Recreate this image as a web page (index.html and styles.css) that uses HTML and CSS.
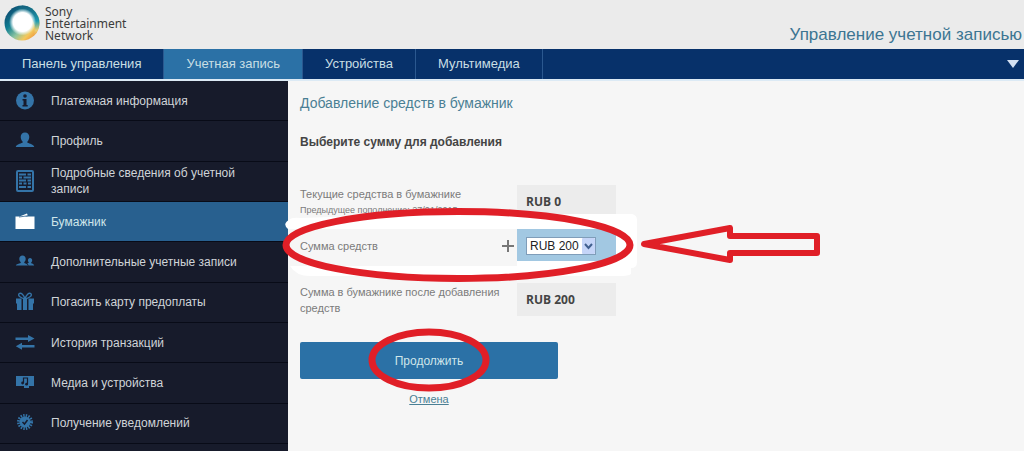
FILE: index.html
```html
<!DOCTYPE html>
<html lang="ru">
<head>
<meta charset="utf-8">
<title>Управление учетной записью</title>
<link rel="stylesheet" href="styles.css">
</head>
<body>
<header class="header">
  <a class="brand" href="#">
    <svg class="brand-mark" viewBox="0 0 36 36" aria-hidden="true">
      <defs>
        <linearGradient id="ring" x1="0" y1="0.1" x2="0.9" y2="1">
          <stop offset="0" stop-color="#0d3c66"/>
          <stop offset="0.35" stop-color="#0f7f93"/>
          <stop offset="0.6" stop-color="#8fc5a0"/>
          <stop offset="0.78" stop-color="#f3c95c"/>
          <stop offset="1" stop-color="#ee7f2b"/>
        </linearGradient>
        <linearGradient id="edge" x1="0" y1="0" x2="0" y2="1">
          <stop offset="0" stop-color="#14607c"/>
          <stop offset="0.5" stop-color="#1c9ab0"/>
          <stop offset="0.8" stop-color="#e9cf70"/>
          <stop offset="1" stop-color="#f09a3a"/>
        </linearGradient>
        <radialGradient id="glow">
          <stop offset="0.7" stop-color="#fff"/>
          <stop offset="1" stop-color="#fff" stop-opacity="0"/>
        </radialGradient>
      </defs>
      <circle cx="18" cy="18" r="17.500" fill="url(#ring)"/>
      <path d="M18 .5A17.500 17.500 0 0 1 29 31.600C34 20 28 8 14 6Z" fill="url(#edge)"/>
      <circle cx="18.500" cy="17" r="13.500" fill="url(#glow)"/>
    </svg>
    <span class="brand-name">Sony<br>Entertainment<br>Network</span>
  </a>
  <h1 class="header-title">Управление учетной записью</h1>
</header>

<nav class="tabs">
  <a class="tab" href="#">Панель управления</a>
  <a class="tab tab-active" href="#" aria-current="page">Учетная запись</a>
  <a class="tab" href="#">Устройства</a>
  <a class="tab" href="#">Мультимедиа</a>
  <button class="tabs-more" type="button" aria-label="Меню">
    <svg width="12" height="8" viewBox="0 0 12 8"><path d="M0 0h12L6 8z" fill="#d3e0f2"/></svg>
  </button>
</nav>

<div class="layout">
  <nav class="sidebar">
    <a class="side-item" href="#">
      <svg class="side-icon" viewBox="0 0 20 20"><circle cx="10" cy="9.500" r="9" fill="currentColor"/><circle cx="10" cy="5" r="1.800" fill="#171b2d"/><path d="M7.500 8h4v6h1.200v1.500H7.500V14h1V9.500h-1z" fill="#171b2d"/></svg>
      <span>Платежная информация</span>
    </a>
    <a class="side-item" href="#">
      <svg class="side-icon" viewBox="0 0 20 20"><path fill="currentColor" d="M10 1.500c2.700 0 4.300 1.900 4.300 4.500 0 1.900-.8 3.500-1.900 4.500v1.300c2.500.9 5.900 1.600 6.900 4.200H.7c1-2.600 4.400-3.300 6.900-4.200v-1.300C6.500 9.500 5.700 7.900 5.700 6c0-2.600 1.600-4.500 4.300-4.500z"/></svg>
      <span>Профиль</span>
    </a>
    <a class="side-item" href="#">
      <svg class="side-icon side-icon-tall" viewBox="0 0 20 24"><rect x="2" y="2" width="16" height="20" rx="1" fill="none" stroke="currentColor" stroke-width="2"/><path d="M4 5.500h7m1.500 0H16M4 8.500h3m1.500 0H16M4 11.500h7m1.500 0H16M4 14.500h3m1.500 0h3m1.500 0h3M4 18h7m1.500 0H16" stroke="currentColor" stroke-width="2"/></svg>
      <span>Подробные сведения об учетной записи</span>
    </a>
    <a class="side-item side-active" href="#" aria-current="page">
      <svg class="side-icon" viewBox="0 0 20 20"><path fill="#fff" d="M.5 4.500h4L12 1.500l.8 2-3 1h9.700V17H.5z"/><path d="M4 5 12.800 3.800" stroke="#28608f" stroke-width=".8"/></svg>
      <span>Бумажник</span>
    </a>
    <a class="side-item" href="#">
      <svg class="side-icon" viewBox="0 0 20 20"><path fill="currentColor" d="M7.500 3.500c2 0 3.200 1.400 3.200 3.300 0 1.400-.6 2.600-1.400 3.300v.8c1.700.6 3.200 1.200 3.700 2.600H.8c.5-1.700 2.900-2 4.900-2.600v-.8C4.900 9.400 4.300 8.200 4.300 6.800c0-1.900 1.200-3.300 3.200-3.300z"/><path fill="currentColor" d="M15 6c1.400 0 2.200 1 2.200 2.300 0 1-.4 1.800-1 2.300v.6c1.400.4 2.700.9 3 2.300h-5.700c-.2-1.100-.6-1.700-1.200-2.200l1.500-.5v-.3c-.5-.6-.9-1.300-.9-2.200C12.900 7 13.700 6 15 6z"/></svg>
      <span>Дополнительные учетные записи</span>
    </a>
    <a class="side-item" href="#">
      <svg class="side-icon" viewBox="0 0 20 20"><path fill="currentColor" d="M1 6.500h5.500V18H2v-6.500H1zM8 6.500h4V18H8zM13.500 6.500H19v5h-1V18h-4.500z"/><path d="M10 7C6 6 2.500 4 4 1.800 6 0 9 3 10 7c1-4 4-7 6-5.200C17.500 4 14 6 10 7z" fill="none" stroke="currentColor" stroke-width="1.300"/></svg>
      <span>Погасить карту предоплаты</span>
    </a>
    <a class="side-item" href="#">
      <svg class="side-icon" viewBox="0 0 20 20"><path fill="currentColor" d="M.5 4.500H13V2l6.500 3.500L13 9V7H.5zM19.500 12H7V9.800L.8 13.300 7 16.800v-2.300h12.500z"/></svg>
      <span>История транзакций</span>
    </a>
    <a class="side-item" href="#">
      <svg class="side-icon" viewBox="0 0 20 20"><path fill="currentColor" d="M1 3h18v10h-5v2H9v-2H1z"/><path fill="none" stroke="#171b2d" stroke-width="1.200" d="M8.500 10V5h4v6"/><circle cx="7.600" cy="10" r="1.400" fill="#171b2d"/><circle cx="11.600" cy="11.200" r="1.400" fill="#171b2d"/></svg>
      <span>Медиа и устройства</span>
    </a>
    <a class="side-item" href="#">
      <svg class="side-icon" viewBox="0 0 20 20"><circle cx="10" cy="9" r="5.500" fill="currentColor"/><circle cx="10" cy="9" r="6.500" fill="none" stroke="currentColor" stroke-width="3" stroke-dasharray="1.400 1.150"/><path d="m7.500 9 2 2 3-4" fill="none" stroke="#171b2d" stroke-width="1.500"/></svg>
      <span>Получение уведомлений</span>
    </a>
  </nav>

  <main class="content">
    <h2 class="title">Добавление средств в бумажник</h2>
    <h3 class="subtitle">Выберите сумму для добавления</h3>
    <form class="form">
      <div class="row">
        <div class="label">Текущие средства в бумажнике<small class="note">Предыдущее пополнение: 27/01/2015</small></div>
        <output class="amount">RUB 0</output>
      </div>
      <div class="row row-select">
        <label class="label" for="sum">Сумма средств</label>
        <svg class="plus" viewBox="0 0 14 14" aria-hidden="true"><path d="M7 1v12M1 7h12" stroke="#777" stroke-width="2"/></svg>
        <div class="amount amount-select">
          <span class="select-box">
            <select id="sum" class="select"><option>RUB 200</option></select>
            <svg class="select-arrow" viewBox="0 0 13 16" aria-hidden="true"><rect width="13" height="16" rx="1" fill="#c5d5f8"/><path d="m3 6 3.500 4L10 6" fill="none" stroke="#41608f" stroke-width="2"/></svg>
          </span>
        </div>
      </div>
      <div class="row">
        <div class="label">Сумма в бумажнике после добавления средств</div>
        <output class="amount">RUB 200</output>
      </div>
      <button class="submit" type="button">Продолжить</button>
      <a class="cancel" href="#">Отмена</a>
    </form>
  </main>

  <svg class="marks" width="560" height="200" viewBox="280 200 560 200" aria-hidden="true">
    <path fill="#fff" fill-rule="evenodd" d="M289 220Q292 217 300 218L430 214H632Q637 215 637 220V262Q637 268 631 268V274Q628 276 620 276H310Q296 276 290 266H288V229Q282 224 289 220zM288 229V266H517V261H616V229z"/>
    <g fill="none" stroke="#e01f27" stroke-width="7">
      <ellipse cx="458" cy="245" rx="172" ry="33.500"/>
      <ellipse cx="429" cy="360" rx="57" ry="28"/>
      <path stroke-width="6" stroke-linejoin="round" d="M644 244 730 228V236H817V253H730V260z"/>
    </g>
  </svg>
</div>
</body>
</html>
```
FILE: styles.css
```css
* { box-sizing: border-box; }

body {
  margin: 0;
  min-height: 100vh;
  display: flex;
  flex-direction: column;
  background: #f6f6f6;
  color: #7b7b7b;
  font-family: "Liberation Sans", Arial, sans-serif;
  font-size: 11px;
}

a { color: inherit; text-decoration: none; }
h1, h2, h3 { margin: 0; font-weight: normal; }

.header {
  display: flex;
  justify-content: space-between;
  height: 49px;
  padding: 5px 2px 0 4px;
  background: #ebebeb;
}
.brand { display: flex; gap: 5px; color: #3c3c3c; }
.brand-mark { width: 36px; height: 36px; }
.brand-name {
  padding-top: 1px;
  font-family: "Noto Sans", sans-serif;
  font-size: 12px;
  line-height: 12px;
}
.header-title {
  align-self: flex-end;
  padding-bottom: 4px;
  color: #3c7592;
  font-size: 17px;
  line-height: 20px;
}

.tabs {
  display: flex;
  height: 32px;
  background: #07316a;
  border-bottom: 2px solid #dceaf5;
  color: #c9dfe4;
  font-size: 13px;
  line-height: 30px;
}
.tab { padding: 0 22px; border-right: 1px solid #2b588f; }
.tab-active { background: #2b71a6; }
.tabs-more {
  display: flex;
  align-items: center;
  margin-left: auto;
  padding: 0 5px;
  border: 0;
  background: none;
}

.layout { position: relative; flex: 1; display: flex; }

.sidebar {
  display: flex;
  flex-direction: column;
  width: 288px;
  padding-bottom: 7px;
  background: #171b2b;
  color: #d0d4d8;
  font-size: 12px;
  line-height: 16px;
}
.side-item {
  flex: 1;
  display: flex;
  align-items: center;
  gap: 16px;
  padding: 0 48px 0 15px;
  min-height: 40px;
  border-bottom: 1px solid #080b17;
}
.side-active { background: #28608f; color: #cfe6ea; }
.side-icon { flex: none; width: 20px; height: 20px; color: #3474a8; }
.side-icon-tall { height: 24px; }

.content { flex: 1; padding: 12px 12px 0; }
.title { color: #4a7f94; font-size: 14px; line-height: 20px; }
.subtitle {
  margin-top: 20px;
  color: #444;
  font-size: 12px;
  font-weight: bold;
  line-height: 18px;
}
.form {
  display: flex;
  flex-direction: column;
  max-width: 316px;
  margin-top: 34px;
}
.row { display: flex; align-items: center; min-height: 33px; }
.row-select { margin: 11px 0 21px; }
.label { flex: 1; line-height: 16px; }
.note { display: block; font-size: 9px; line-height: 16px; white-space: nowrap; }
.amount {
  width: 99px;
  padding: 0 9px;
  background: #ececec;
  color: #444;
  font-family: "Open Sans", sans-serif;
  font-size: 12px;
  font-weight: bold;
  line-height: 33px;
}
.plus { width: 14px; height: 14px; margin-right: 2px; }
.amount-select { display: flex; align-items: center; height: 33px; background: #a2c8e2; }
.select-box { position: relative; display: flex; }
.select {
  appearance: none;
  width: 70px;
  height: 18px;
  padding: 0 3px;
  border: 1px solid #7f9db9;
  border-radius: 0;
  background: #fff;
  color: #222;
  font-family: "Liberation Sans", Arial, sans-serif;
  font-size: 12px;
}
.select-arrow { position: absolute; top: 1px; right: 1px; width: 13px; height: 16px; pointer-events: none; }

.submit {
  width: 258px;
  height: 37px;
  margin: 26px 0 12px;
  border: 0;
  border-radius: 2px;
  background: #2b71a6;
  color: #cfe6ea;
  font-family: inherit;
  font-size: 12px;
}
.cancel {
  width: 258px;
  color: #4a7f94;
  line-height: 16px;
  text-align: center;
  text-decoration: underline;
}

.marks { position: absolute; top: 119px; left: 280px; pointer-events: none; }
```
